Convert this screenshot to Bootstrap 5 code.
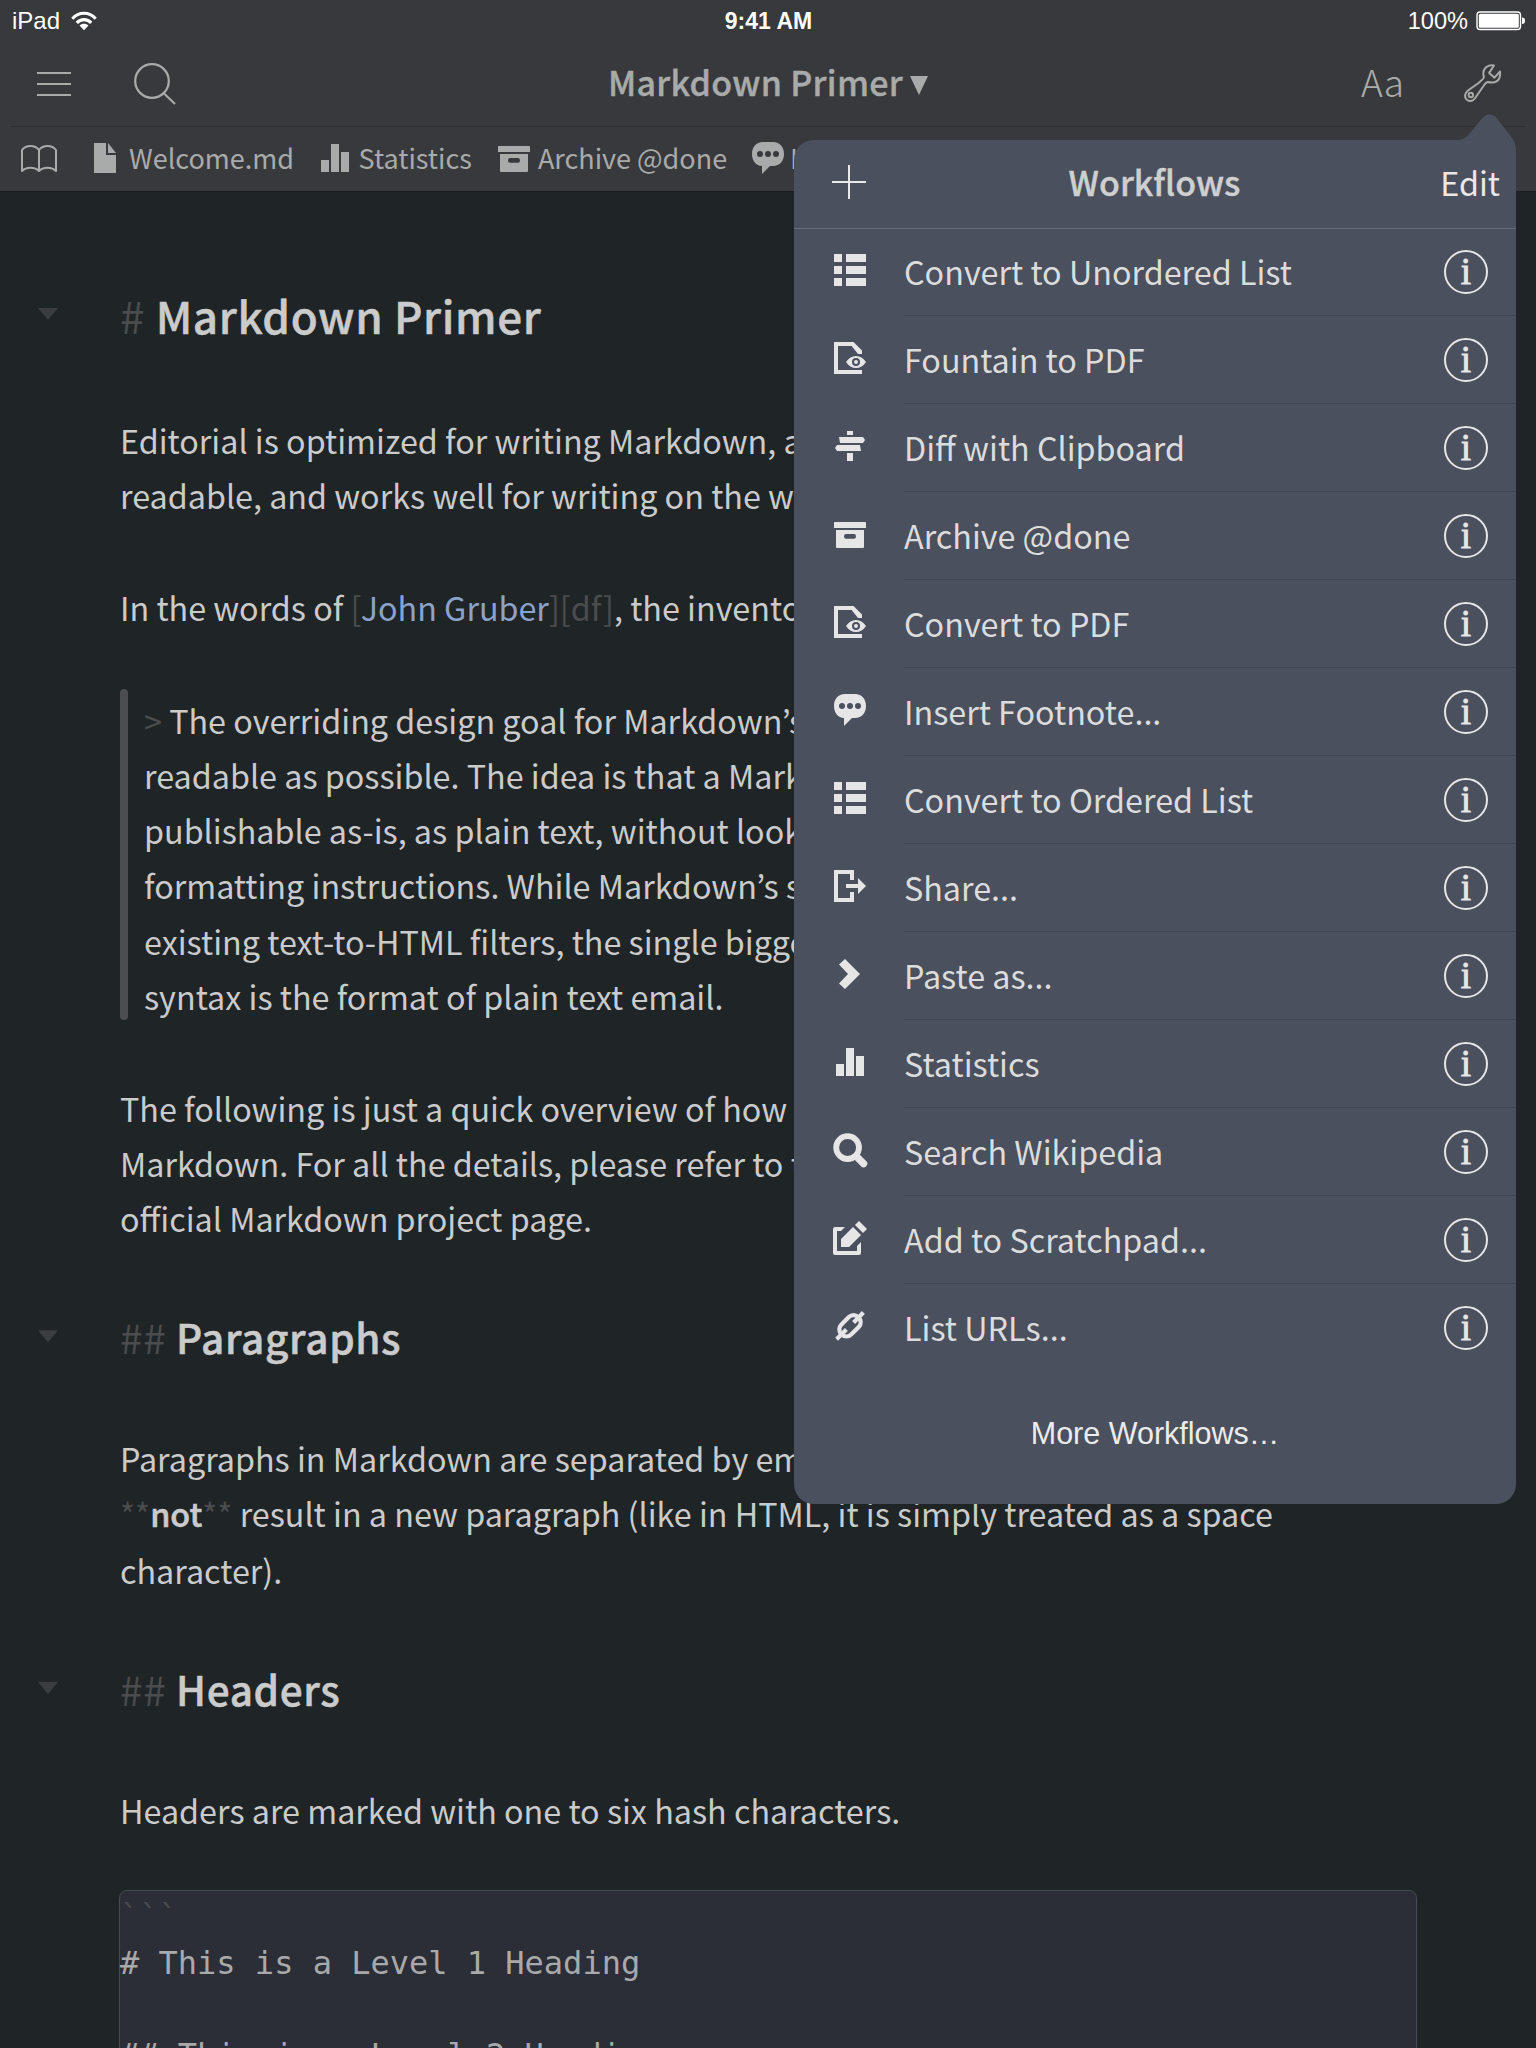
<!DOCTYPE html>
<html lang="en">
<head>
<meta charset="utf-8">
<meta name="viewport" content="width=device-width, initial-scale=1">
<title>Markdown Primer</title>
<link href="https://cdn.jsdelivr.net/npm/bootstrap@5.3.0/dist/css/bootstrap.min.css" rel="stylesheet">
<style>
body{background:#1f2427;color:#cbcbcb;font-family:"Noto Sans CJK KR","Source Sans Pro",sans-serif;font-size:32.3px;line-height:55.1px;width:1536px;height:2048px}
svg{display:block;flex:none;overflow:visible}
.topbar{background:#38393c;height:192px;border-bottom:1px solid #1a1c1e;color:#a9abaa}
.status{height:40px;color:#fff;font:24px/40px "Liberation Sans",Arial,sans-serif;padding:1px 11px 0 12px;display:grid;grid-template-columns:1fr auto 1fr}
.status .clock{font-weight:700;font-size:23px}
.status .pct{font-size:23.6px}
.wifi{margin-left:10px}
.tools{height:86px;padding:0 35px 0 37px;display:grid;grid-template-columns:1fr auto 1fr}
.burger{margin-top:2px}
.lens{margin-left:63px;margin-top:2px}
.doctitle{font-size:34px;font-weight:500;letter-spacing:.3px;-webkit-text-stroke:.4px;line-height:50px;padding-bottom:3px}
.doctitle svg{margin:8px 2px 0 7px}
.aa{font-size:37px;font-weight:300;line-height:50px;margin-right:60px;padding-bottom:4px}
.bookmarks{margin:0 10px;height:65px;border-top:1px solid #2d2e31;font-size:27px;line-height:40px;padding:0 0 2px 11px}
.bookmarks .label{padding-bottom:1px}
.gap-page{margin-left:37px}.gap-name{margin-left:13px}.gap-mark{margin-left:24.5px}
.gap-wide{margin-left:26px}
.gap-tight{margin-left:6.5px}
.doc{padding:91px 119px 0 120px}
.doc h1,.doc h2{line-height:64px;margin:0;font-weight:500;letter-spacing:.65px;-webkit-text-stroke:.5px;position:relative}
.doc h1{font-size:44px}.doc h2{font-size:40.5px}
.doc p,.quote{margin:0}
.doc .after-h1{margin-top:66px}
.doc .para{margin-top:57.3px}
.doc .after-h2{margin-top:62px}
.doc .sub{margin-top:58.7px}
.doc .wrapend{margin-top:2px}
.syn{color:#4a4c4d;font-weight:400;-webkit-text-stroke:0}
.fold{position:absolute;left:-82px;top:25px;width:20px;height:12px;background:#3a3e40;clip-path:polygon(0 0,100% 0,50% 100%)}
.doc b{font-weight:500;-webkit-text-stroke:.6px}
.lnk{color:#8ba3c9}
.quote{padding-left:24px;position:relative;height:331px;line-height:55.15px}
.quote:before{content:"";position:absolute;left:0;top:-4px;width:7.5px;height:331px;border-radius:4px;background:#4b4d50}
.codebox{margin:52px 0 0 -1px;width:1298px;height:220px;background:#2b2e36;border:1px solid #434a52;border-radius:8px;font:32px/46px "DejaVu Sans Mono",monospace;color:#a9a9a9;white-space:pre;padding-top:3px}
.codebox .tick{color:#484b4f}
.pop{position:absolute;left:794px;top:140px;width:722px;height:1364px;background:#4a505d;border-radius:20px 10px 20px 20px;color:#dcdcdc;line-height:50px}
.pop .tip{position:absolute;left:656px;top:-26px}
.pophead{height:89px;border-bottom:1px solid #656d7a;color:#e9e9e9;padding:0 16px 4px 15px;display:grid;grid-template-columns:1fr auto 1fr}
.pophead svg{margin-left:23px}
.pophead .ttl{color:#cfcfcf;font-size:34px;font-weight:500;-webkit-text-stroke:.4px}
.rowset{margin-top:-1px}
.item{height:88px;padding-left:40px}
.item svg{fill:#e6e6e6;margin-bottom:4px}
.item .wide{margin-left:-2px;margin-right:-2px}
.item .body{margin-left:38px;border-bottom:1px solid #3e4450;height:88px;padding-right:28px}
.item .name{padding-bottom:1px}
.item:last-child .body{border-color:transparent}
.info{width:44px;height:44px;border:2px solid #e6e6e6;border-radius:50%;color:#e6e6e6;font:37px/39px "Liberation Serif",serif;-webkit-text-stroke:.9px;text-align:center}
.more{font:30.5px/40px "Liberation Sans",Arial,sans-serif;color:#ececec;margin-top:41px}
</style>
<script src="https://cdn.jsdelivr.net/npm/bootstrap@5.3.0/dist/js/bootstrap.bundle.min.js"></script>
</head>
<body class="position-relative overflow-hidden">
<svg width="0" height="0" class="position-absolute">
<symbol id="list" viewBox="0 0 16 16"><path d="M0 0h4v4H0zM6 0h10v4H6zM0 6h4v4H0zM6 6h10v4H6zM0 12h4v4H0zM6 12h10v4H6z"/></symbol>
<symbol id="pdf" viewBox="0 0 16 16"><path d="M0 0H9.8L14 4.3V6H12L8.8 2H2V14H14V16H0Z"/><path fill-rule="evenodd" d="M6 10Q8 7 11 7T16 10Q14 13 11 13T6 10ZM11 8a2 2 0 1 0 0 4a2 2 0 1 0 0-4ZM11 9a1 1 0 1 1 0 2a1 1 0 1 1 0-2Z"/></symbol>
<symbol id="diff" viewBox="0 0 16 16"><path d="M6.5.5h3v2h-3zM2.5 3.5h12l1 1.500-1 1.500H3zM1.500 7.500H13l.5 3h-12L.5 9zM6.500 11.500h3v4h-3z"/></symbol>
<symbol id="archive" viewBox="0 0 16 16"><path fill-rule="evenodd" d="M.4 2h15.200q.4 0 .4.400V5H0V2.400Q0 2 .4 2zM1 6h14v8.500q0 .5-.5.5h-13q-.5 0-.5-.5zM6 8q-1 0-1 1.200t1 1.200h4q1 0 1-1.200T10 8z"/></symbol>
<symbol id="chat" viewBox="0 0 16 16"><path fill-rule="evenodd" d="M5.500 0h5C14 0 16 2.600 16 6s-2 6-5.500 6H9l-4 4v-4C2 12 0 9.400 0 6s2-6 5.500-6zM4 4.500a1.500 1.500 0 1 0 0 3a1.500 1.500 0 1 0 0-3zM8 4.500a1.500 1.500 0 1 0 0 3a1.500 1.500 0 1 0 0-3zM12 4.500a1.500 1.500 0 1 0 0 3a1.500 1.500 0 1 0 0-3z"/></symbol>
<symbol id="share" viewBox="0 0 16 16"><path d="M0 0h10v5H8V2H2v12h6v-3h2v5H0zM6 7h6V4l4 4-4 4V9H6z"/></symbol>
<symbol id="chev" viewBox="0 0 16 16"><path d="M2.500 3.300L5.500.5 13 8l-7.500 7.500-3-2.800L7 8z"/></symbol>
<symbol id="stats" viewBox="0 0 16 16"><path d="M1 9h4v6H1zM6 1h4v14H6zM11 5h4v10h-4z"/></symbol>
<symbol id="find" viewBox="-1 -1 18 18"><circle cx="6.800" cy="6.800" r="5.700" fill="none" stroke="#e6e6e6" stroke-width="2.900"/><path d="M11.300 11.300L14.800 14.800" stroke="#e6e6e6" stroke-width="3.600" stroke-linecap="round"/></symbol>
<symbol id="edit" viewBox="-1 -1 18 18"><path d="M5.500 2.500H.5q-1 0-1 1v12q0 1 1 1h12q1 0 1-1V10l-2 2v2.500h-10v-10h2zM3.500 12.500v-4l6-6 4 4-6 6zM10.500 1.500l2-2 4 4-2 2z"/></symbol>
<symbol id="link" viewBox="0 0 16 16"><g fill="none" stroke="#e6e6e6" stroke-width="2.100"><rect x="2" y="4.400" width="12" height="7" rx="3.300" transform="rotate(-45 8 7.900)"/><path d="M14.700 1.300L9.800 6.200M1.300 14.600L6.200 9.700"/></g></symbol>
</svg>

<header class="topbar">
  <div class="status align-items-center">
    <div class="d-flex align-items-center"><span>iPad</span>
      <svg class="wifi" width="28" height="20" viewBox="0 0 30 20"><g fill="none" stroke="#fff" stroke-width="3.300"><path d="M2.500 7.500C9.500-.2 20.500-.2 27.500 7.500"/><path d="M7.300 12C11.600 7.400 18.400 7.400 22.700 12"/></g><path d="M15 20l-4.800-5.300c2.600-2.500 7-2.500 9.600 0z" fill="#fff"/></svg>
    </div>
    <span class="clock">9:41 AM</span>
    <div class="d-flex align-items-center justify-content-end gap-2"><span class="pct">100%</span>
      <svg width="49" height="20" viewBox="0 0 49 20"><rect x="1" y="1" width="43.500" height="17.500" rx="3" fill="none" stroke="#fff" stroke-width="1.400"/><rect x="2.800" y="2.800" width="40" height="14" rx="1.500" fill="#fff"/><path d="M46 6.500q3 0 3 3.300t-3 3.300z" fill="#fff"/></svg>
    </div>
  </div>
  <nav class="tools align-items-center">
    <div class="d-flex align-items-center">
      <svg class="burger" width="34" height="24" viewBox="0 0 34 24" stroke="#a9abaa" stroke-width="2"><path d="M0 1h34M0 12h34M0 23h34"/></svg>
      <svg class="lens" width="42" height="42" viewBox="0 0 42 42" fill="none" stroke="#a9abaa" stroke-width="2.200"><circle cx="18" cy="18" r="16.800"/><path d="M29.500 30L41 41"/></svg>
    </div>
    <div class="doctitle d-flex align-items-center"><span>Markdown Primer</span><svg width="18" height="19" viewBox="0 0 18 19"><path d="M0 0h18L9 19z" fill="#a9abaa" stroke="none"/></svg></div>
    <div class="d-flex align-items-center justify-content-end">
      <span class="aa">Aa</span>
      <svg width="37" height="38" viewBox="0 0 37 38" fill="none" stroke="#a9abaa" stroke-width="2" stroke-linejoin="round"><path d="M30 1.500C24 .5 19.500 4 19.300 9c0 2 .6 3.200.6 4.300 0 1.500-2 3-6 6.200L4 26.500C.5 29.500.2 33 2.500 35.400c2.600 2.500 6.500 2 8.700-1.400L19.500 22c1.500-2.300 2.600-4 4.500-4 5 1.200 9.500.2 11.400-4 .9-2.200 1-4.300.6-6.500l-5.500 6.200-5.300-4.800z"/><circle cx="6.800" cy="31" r="2.200"/></svg>
    </div>
  </nav>
  <div class="bookmarks d-flex align-items-center overflow-hidden text-nowrap">
    <svg width="36" height="27" viewBox="0 0 36 27" fill="none" stroke="#a9abaa" stroke-width="2" stroke-linejoin="round"><path d="M18 5C14-.3 5-.3 1 5v21c4-4.500 13-4.500 17 0 4-4.500 13-4.500 17 0V5c-4-5.300-13-5.300-17 0zv20.500"/></svg>
    <svg class="gap-page" width="22" height="30" viewBox="0 0 22 30" fill="#a9abaa"><path d="M0 0h12v12h10v18H0zM14 0l8 10h-8z"/></svg>
    <span class="label gap-name">Welcome.md</span>
    <svg class="gap-mark" width="32" height="32" fill="#a9abaa"><use href="#stats"/></svg>
    <span class="label ms-2">Statistics</span>
    <svg class="gap-wide" width="32" height="32" fill="#a9abaa"><use href="#archive"/></svg>
    <span class="label ms-2">Archive @done</span>
    <svg class="gap-mark" width="32" height="32" fill="#a9abaa"><use href="#chat"/></svg>
    <span class="label gap-tight">Insert Footnote...</span>
  </div>
</header>

<main class="doc text-nowrap">
  <h1><i class="fold"></i><span class="syn">#</span> Markdown Primer</h1>
  <p class="after-h1">Editorial is optimized for writing Markdown, a<br>readable, and works well for writing on the w</p>
  <p class="para">In the words of <span class="syn">[</span><span class="lnk">John Gruber</span><span class="syn">][df]</span>, the invento</p>
  <div class="quote para"><span class="syn">&gt;</span> The overriding design goal for Markdown’s<br>readable as possible. The idea is that a Mark<br>publishable as-is, as plain text, without look<br>formatting instructions. While Markdown’s s<br>existing text-to-HTML filters, the single bigge<br>syntax is the format of plain text email.</div>
  <p class="para">The following is just a quick overview of how<br>Markdown. For all the details, please refer to t<br>official Markdown project page.</p>
  <h2 class="sub"><i class="fold"></i><span class="syn">##</span> Paragraphs</h2>
  <p class="after-h2">Paragraphs in Markdown are separated by em<br><span class="syn">**</span><b>not</b><span class="syn">**</span> result in a new paragraph (like in HTML, it is simply treated as a space</p>
  <p class="wrapend">character).</p>
  <h2 class="sub"><i class="fold"></i><span class="syn">##</span> Headers</h2>
  <p class="after-h2">Headers are marked with one to six hash characters.</p>
  <div class="codebox"><span class="tick">```</span>
# This is a Level 1 Heading

## This is a Level 2 Heading</div>
</main>

<aside class="pop">
  <svg class="tip" width="66" height="90" viewBox="0 0 66 90"><path d="M2 26.500C12 26.200 15 25 20 19L32 4.500C36-1 43-1 47 4.500L62 24Q66 29 66 38V90H0V26.500z" fill="#4a505d"/></svg>
  <div class="pophead align-items-center position-relative">
    <svg width="34" height="34" viewBox="0 0 34 34" stroke="#e9e9e9" stroke-width="2"><path d="M17 0v34M0 17h34"/></svg>
    <span class="ttl">Workflows</span>
    <span class="text-end">Edit</span>
  </div>
  <div class="rowset position-relative" id="items"></div>
  <div class="more text-center">More Workflows…</div>
</aside>
<script>
const rows=[["list","Convert to Unordered List"],["pdf","Fountain to PDF"],["diff","Diff with Clipboard"],["archive","Archive @done"],["pdf","Convert to PDF"],["chat","Insert Footnote..."],["list","Convert to Ordered List"],["share","Share..."],["chev","Paste as..."],["stats","Statistics"],["find","Search Wikipedia"],["edit","Add to Scratchpad..."],["link","List URLs..."]];
document.getElementById("items").innerHTML=rows.map(([icon,label])=>{
  const wide=icon==="find"||icon==="edit";
  const size=wide?36:32;
  return `<div class="item d-flex align-items-center"><svg width="${size}" height="${size}" class="${wide?'wide':''}"><use href="#${icon}"/></svg><div class="body d-flex align-items-center justify-content-between flex-grow-1"><span class="name">${label}</span><span class="info">i</span></div></div>`;
}).join("");
</script>
</body>
</html>
